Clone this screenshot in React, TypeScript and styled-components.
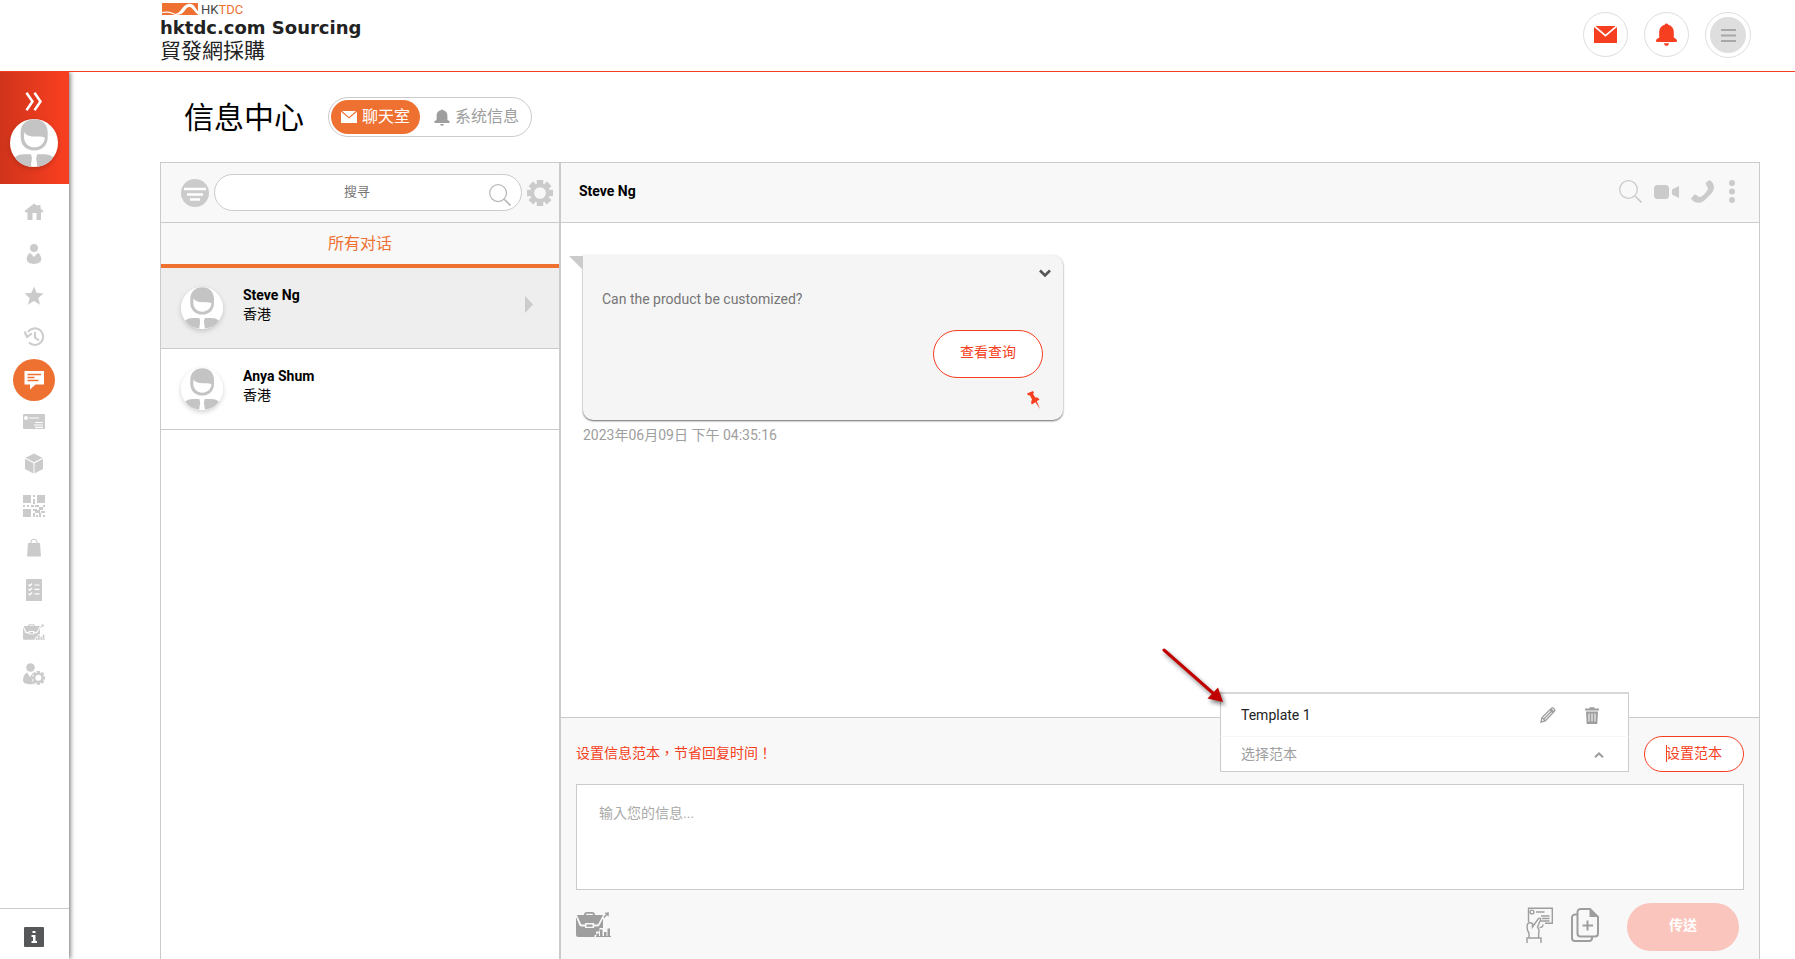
import React from 'react';
import styled, { createGlobalStyle } from 'styled-components';

const c = {
  red: '#f63e20',
  orange: '#ee7132',
  line: '#cbcbcb',
  icon: '#cbcbcb',
  mid: '#9e9e9e',
  panel: '#f8f8f8',
};

const GlobalStyle = createGlobalStyle`
  *, *::before, *::after { box-sizing: border-box; }
  body {
    margin: 0;
    background: #fff;
    color: #000;
    font-family: Roboto, "Noto Sans CJK TC", "Noto Sans CJK SC", sans-serif;
    font-size: 14px;
    line-height: 20px;
  }
  button, input, select, textarea { font: inherit; color: inherit; }
  button { padding: 0; border: 0; background: none; cursor: pointer; }
  a { color: inherit; text-decoration: none; }
  svg { display: block; flex: none; }
  h1, h2, p, ul { margin: 0; padding: 0; }
  ul { list-style: none; }
`;

/* ---------- page frame ---------- */

const Page = styled.div`
  display: flex;
  flex-direction: column;
  min-height: 100vh;
`;

const Header = styled.header`
  display: flex;
  justify-content: space-between;
  height: 72px;
  padding: 0 44px 0 160px;
  border-bottom: 1px solid ${c.red};
`;

const Brand = styled.a`
  display: flex;
  flex-direction: column;
  padding-top: 2px;
  color: #222;
`;

const BrandName = styled.span`
  font: bold 18px/24px "DejaVu Sans", sans-serif;
`;

const BrandLocal = styled.span`
  font-size: 21px;
  line-height: 22px;
`;

const HeaderActions = styled.div`
  display: flex;
  align-items: flex-start;
  gap: 16px;
  padding-top: 12px;
`;

const RoundButton = styled.button<{ $size?: number }>`
  display: grid;
  place-items: center;
  width: ${(p) => p.$size ?? 45}px;
  height: ${(p) => p.$size ?? 45}px;
  border: 1px solid #dedede;
  border-radius: 50%;
  color: ${c.red};
`;

const MenuDisc = styled.span`
  display: grid;
  place-items: center;
  width: 36px;
  height: 36px;
  border-radius: 50%;
  background: #dedede;
`;

const Body = styled.div`
  display: flex;
  flex: 1;
`;

/* ---------- side bar ---------- */

const Sidebar = styled.aside`
  display: flex;
  flex-direction: column;
  width: 69px;
  flex: none;
  box-shadow: 1px 0 5px rgba(0, 0, 0, 0.6);
  clip-path: inset(0 -12px 0 0);
`;

const SidebarTop = styled.div`
  display: flex;
  flex-direction: column;
  align-items: center;
  gap: 8px;
  height: 112px;
  padding: 20px 1px 0 0;
  background: linear-gradient(90deg, #cf341b, #f63e20 90%);
`;

const Nav = styled.nav`
  display: flex;
  flex-direction: column;
  align-items: center;
  padding: 7px 1px 0 0;
`;

const NavItem = styled.a<{ $active?: boolean }>`
  display: grid;
  place-items: center;
  width: 42px;
  height: 42px;
  border-radius: 50%;
  color: ${(p) => (p.$active ? '#fff' : c.icon)};
  background: ${(p) => (p.$active ? c.orange : 'transparent')};
`;

const SidebarFoot = styled.div`
  display: grid;
  place-items: center;
  height: 51px;
  margin-top: auto;
  padding: 6px 1px 0 0;
  border-top: 1px solid ${c.line};
`;

/* ---------- main ---------- */

const Main = styled.main`
  display: flex;
  flex: 1;
  min-width: 0;
  flex-direction: column;
  padding: 25px 35px 0 91px;
`;

const TitleRow = styled.div`
  display: flex;
  align-items: center;
  gap: 24px;
  height: 40px;
  margin-bottom: 25px;
  padding-left: 24px;
`;

const Title = styled.h1`
  padding-top: 2px;
  font-size: 30px;
  font-weight: 400;
  line-height: 40px;
`;

const Switcher = styled.div`
  display: flex;
  align-items: center;
  height: 40px;
  padding: 2px;
  border: 1px solid ${c.line};
  border-radius: 20px;
`;

const SwitchTab = styled.button<{ $active?: boolean }>`
  display: flex;
  align-items: center;
  gap: 5px;
  height: 34px;
  padding: 0 10px 0 ${(p) => (p.$active ? 10 : 14)}px;
  border-radius: 17px;
  font-size: 16px;
  color: ${(p) => (p.$active ? '#fff' : c.mid)};
  background: ${(p) => (p.$active ? c.orange : 'transparent')};
`;

const Panels = styled.div`
  display: grid;
  flex: 1;
  grid-template-columns: 400px minmax(0, 1fr);
  border-top: 1px solid ${c.line};
`;

const Panel = styled.section`
  display: flex;
  flex-direction: column;
  border: solid ${c.line};
  border-width: 0 1px;
`;

const PanelHead = styled.div`
  display: flex;
  align-items: center;
  height: 60px;
  border-bottom: 1px solid ${c.line};
  background: ${c.panel};
`;

const ListHead = styled(PanelHead)`
  gap: 5px;
  padding: 0 6px 0 20px;
`;

const SearchBox = styled.label`
  position: relative;
  flex: 1;
  color: #b9b9b9;

  > svg {
    position: absolute;
    top: 10px;
    right: 11px;
  }
`;

const SearchInput = styled.input`
  display: block;
  width: 100%;
  height: 37px;
  padding: 0 70px 2px 48px;
  border: 1px solid ${c.line};
  border-radius: 19px;
  outline: 0;
  background: #fff;
  color: #333;
  font-size: 13px;
  text-align: center;

  &::placeholder { color: #757575; }
`;

const IconButton = styled.button<{ $dark?: boolean }>`
  color: ${(p) => (p.$dark ? c.mid : c.icon)};
`;

const AllTab = styled.button`
  height: 45px;
  padding-top: 1px;
  border-bottom: 4px solid ${c.orange};
  background: ${c.panel};
  color: ${c.orange};
  font-size: 16px;
`;

const Contact = styled.button<{ $active?: boolean }>`
  display: flex;
  width: 100%;
  height: 81px;
  align-items: center;
  gap: 20px;
  padding: 0 26px 0 20px;
  border-bottom: 1px solid ${c.line};
  background: ${(p) => (p.$active ? '#eee' : '#fff')};
  color: ${c.icon};
  text-align: left;
`;

const AvatarFrame = styled.span`
  display: block;
  border-radius: 50%;
  box-shadow: 0 2px 5px rgba(0, 0, 0, 0.18);
`;

const ContactText = styled.span`
  flex: 1;
  padding-bottom: 6px;
  color: #000;
  line-height: 19px;

  > * { display: block; }
`;

const ChatHead = styled(PanelHead)`
  justify-content: space-between;
  padding: 0 24px 2px 18px;
`;

const ChatName = styled.h2`
  padding-bottom: 1px;
  font-size: 14px;
`;

const ChatTools = styled.div`
  display: flex;
  align-items: center;
  gap: 12px;
`;

const Messages = styled.div`
  flex: 1;
  padding: 32px 22px;
`;

const Bubble = styled.article`
  position: relative;
  display: flex;
  max-width: 480px;
  flex-direction: column;
  align-items: flex-end;
  padding: 10px 20px 11px 19px;
  border-radius: 0 10px 10px 10px;
  background: #f5f5f5;
  box-shadow: 0 1px 2px rgba(0, 0, 0, 0.6);

  &::before {
    content: "";
    position: absolute;
    top: 1px;
    left: -14px;
    border: solid transparent;
    border-width: 0 14px 14px 0;
    border-right-color: ${c.icon};
  }
`;

const BubbleToggle = styled.button`
  margin-right: -10px;
  color: #555;
`;

const BubbleText = styled.p`
  align-self: stretch;
  margin: 8px 0 21px;
  color: #757575;
`;

const OutlineButton = styled.button<{ $tall?: boolean }>`
  position: relative;
  height: ${(p) => (p.$tall ? 48 : 36)}px;
  padding: 0 ${(p) => (p.$tall ? 26 : 21)}px ${(p) => (p.$tall ? 4 : 2)}px;
  border: 1px solid ${c.red};
  border-radius: 24px;
  background: #fff;
  color: ${c.red};
`;

const Caret = styled.i`
  position: absolute;
  top: 8px;
  left: 21px;
  width: 1px;
  height: 17px;
  background: ${c.red};
`;

const PinIcon = styled.span`
  margin: 13px 2px 0 0;
  color: ${c.red};
`;

const Stamp = styled.time`
  display: block;
  margin-top: 5px;
  color: ${c.mid};
`;

/* ---------- composer ---------- */

const Composer = styled.form`
  padding: 18px 15px 8px;
  border-top: 1px solid ${c.line};
  background: ${c.panel};
`;

const TemplateRow = styled.div`
  display: flex;
  align-items: center;
  gap: 15px;
  margin-bottom: 12px;
`;

const Hint = styled.p`
  flex: 1;
  padding-bottom: 2px;
  color: ${c.red};
`;

const Picker = styled.div`
  position: relative;
  width: 409px;
`;

const PickerSelect = styled.select`
  display: block;
  width: 100%;
  height: 36px;
  padding: 0 20px;
  border: 1px solid ${c.line};
  border-top-color: #f7f7f7;
  border-radius: 0;
  outline: 0;
  appearance: none;
  background: #fff;
  color: ${c.mid};
`;

const PickerArrow = styled.span`
  position: absolute;
  top: 16px;
  right: 25px;
  color: ${c.mid};
  pointer-events: none;
`;

const PickerMenu = styled.ul`
  position: absolute;
  right: 0;
  bottom: 100%;
  left: 0;
  border: 1px solid ${c.line};
  border-top: 2px solid #d8d8d8;
  border-bottom: 0;
  background: #fff;
`;

const PickerOption = styled.li`
  display: flex;
  height: 42px;
  align-items: center;
  gap: 29px;
  padding: 0 29px 0 20px;

  > button:first-child {
    flex: 1;
    color: #222;
    text-align: left;
  }
`;

const Pointer = styled.svg`
  position: absolute;
  bottom: 60px;
  left: -60px;
  filter: drop-shadow(2px 3px 2px rgba(0, 0, 0, 0.5));
  pointer-events: none;
`;

const MessageInput = styled.textarea`
  display: block;
  width: 100%;
  height: 106px;
  padding: 18px 22px;
  border: 1px solid ${c.line};
  outline: 0;
  resize: none;
  background: #fff;

  &::placeholder { color: #a9a9a9; }
`;

const Toolbar = styled.div`
  display: flex;
  align-items: center;
  gap: 18px;
  margin: 13px 5px 0 0;

  > button {
    padding-bottom: 5px;
    color: ${c.mid};
  }

  > button:first-child { margin-right: auto; }
`;

const SendButton = styled.button`
  && {
    width: 112px;
    height: 48px;
    margin-left: 10px;
    padding-bottom: 4px;
    border-radius: 24px;
    background: #f9c5bc;
    color: #fff;
    font-weight: 700;
  }
`;

/* ---------- drawings ---------- */

const Avatar = ({ size }: { size: number }) => (
  <AvatarFrame>
    <svg width={size} height={size} viewBox="0 0 42 42">
      <circle cx="21" cy="21" r="21" fill="#fff" />
      <path
        fill="#c4c4c4"
        d="M21.3.3C28 .3 33 4.500 33 12v4c0 7-5 11.600-11.700 11.600S9.300 23 9.300 16v-4C9.300 4.500 14.500.3 21.300.3ZM4.300 33.600c2-2 4.500-2.700 7.700-2.700h6.300l.9 3.300-1 7.600C12.500 41 7.500 38.500 4.300 33.600Zm33.500 0c-2-2-4.500-2.700-7.700-2.700h-6.300l-.9 3.300 1 7.600c5.600-.8 10.700-3.300 13.900-8.200Z"
      />
      <path fill="#fff" d="M12.600 11.300c1.400 3.500 6 4 10.400 4 3.300 0 5.700-.1 7.500 1-.5 5.200-4.400 8.400-9.200 8.400-5 0-8.800-3.600-9-8.400-.1-1.700 0-3.500.3-5Z" />
    </svg>
  </AvatarFrame>
);

const Logo = () => (
  <svg width="90" height="14" viewBox="0 0 90 14">
    <path fill="#ee7132" d="M2 1h36v12H2Z" />
    <path fill="#fff" d="M0 10c5-.4 9-.8 12 .4 2 .8 3 1.600 4.500 1.200C21 10.500 22 3.500 28 2c3-.6 5 .6 6.500 2.500C36 6.500 38 10 42 13h-3c-4-2-5.500-6-8-7.500-2-1-4 0-5 1.500C24.500 9 22 13 17 13c-4 0-5-2-9-2.300L0 11Z" />
    <text x="41" y="12" fontFamily="Roboto, sans-serif" fontSize="13" fill="#444">
      HK<tspan fill="#ee7132">TDC</tspan>
    </text>
  </svg>
);

const Envelope = ({ w, h }: { w: number; h: number }) => (
  <svg width={w} height={h} viewBox="0 0 23 17" fill="currentColor" preserveAspectRatio="none">
    <path d="M1.500 0h20l-10 8.600ZM0 1l11.500 9.800L23 1v16H0Z" />
  </svg>
);

const Bell = ({ w, h }: { w: number; h: number }) => (
  <svg width={w} height={h} viewBox="0 0 21 23" fill="currentColor">
    <path d="M8.700 1.800a1.900 1.900 0 0 1 3.600 0C16 2.800 17.800 5.500 17.800 9v5.500c0 .8 3.200 1.200 3.200 3 0 1-.6 1.500-1.500 1.500h-18C.6 19 0 18.500 0 17.500c0-1.800 3.200-2.200 3.200-3V9C3.200 5.500 5 2.800 8.700 1.800ZM8 20.200h5C12.600 22 11.700 22.800 10.500 22.800S8.400 22 8 20.200Z" />
  </svg>
);

const SearchIcon = ({ size }: { size: number }) => (
  <svg width={size} height={size} viewBox="0 0 23 23" fill="none" stroke="currentColor" strokeWidth="1.300">
    <circle cx="9.500" cy="9.500" r="8.800" />
    <path d="m16 16 6.500 6.500" strokeWidth="1.700" />
  </svg>
);

const Briefcase = ({ w, h }: { w: number; h: number }) => (
  <svg width={w} height={h} viewBox="0 0 35 25" fill="currentColor">
    <path d="M8 3c0-2 1-3 3-3h5c2 0 3 1 3 3h8l-4.500 8.500c-.4.800-.8 1-1.700 1h-2.600V11H9v1.500H6.500c-.9 0-1.400-.3-1.700-1L1 3Zm2 0h7c0-.9-.4-1.300-1.300-1.300h-4.400C10.400 1.700 10 2.100 10 3Z" />
    <path d="M0 5l3.300 8c.4 1 1 1.400 2.200 1.400H9V16h9v-1.600h3.300c1.200 0 1.800-.4 2.300-1.400L27 6.500V16h-3.500v3.500H20V23h-1.500v2H2.500C.8 25 0 24.200 0 22.500ZM10.500 12.500h6v2.200h-6Z" />
    <path d="M20.500 21.500H23V25h-2.500ZM24 17.500h2.500V25H24ZM28 20h2.500v5H28ZM31.500 16.500H34V25h-2.500ZM20 24h15v1H20ZM28.500.8 33 .3l-.5 4.500-1.500-1.500-2.500 2.800-1.200-1.200L30 2.300Z" />
  </svg>
);

const gearTeeth = [0, 45, 90, 135];

const Gear = ({ size }: { size: number }) => (
  <svg width={size} height={size} viewBox="0 0 24 24">
    {gearTeeth.map((a) => (
      <path key={a} d="M9 0h6v3.500l-1 1.500h-4L9 3.500ZM9 24h6v-3.500l-1-1.500h-4l-1 1.500Z" fill="currentColor" transform={`rotate(${a} 12 12)`} />
    ))}
    <circle cx="12" cy="12" r="7.200" fill="none" stroke="currentColor" strokeWidth="3.600" />
  </svg>
);

const Glyph = ({ children, w = 22, h = 22 }: { children: React.ReactNode; w?: number; h?: number }) => (
  <svg width={w} height={h} viewBox={`0 0 ${w} ${h}`} fill="currentColor">
    {children}
  </svg>
);

const navItems: { label: string; active?: boolean; icon: React.ReactNode }[] = [
  {
    label: '主页',
    icon: (
      <Glyph>
        <path d="M11 2.500 14.500 5V4H17.500v3.500L20.500 10l-1 1.500H18V19h-4.500v-7h-4v7H4.500v-7.500h-2l-1-1.500Z" />
      </Glyph>
    ),
  },
  {
    label: '帐户',
    icon: (
      <Glyph>
        <circle cx="11" cy="5" r="4" />
        <path d="M7 9.700 11 14l4-4.300c2 1.300 3.300 4 3.300 6.600 0 2.700-3.300 4.700-7.300 4.700s-7.300-2-7.300-4.700c0-2.600 1.300-5.300 3.300-6.600Z" />
      </Glyph>
    ),
  },
  {
    label: '收藏',
    icon: (
      <Glyph>
        <path d="m11 1.500 2.600 6.300 6.900.6-5.200 4.600 1.700 6.700-6-3.600-6 3.600 1.700-6.700L1.500 8.400l6.900-.6Z" />
      </Glyph>
    ),
  },
  {
    label: '历史',
    icon: (
      <Glyph>
        <path d="M5 5A8.300 8.300 0 1 1 6 15.500" fill="none" stroke="currentColor" strokeWidth="2" />
        <path d="M1.500 4.500 4 10 9 6.500M12 5v5.500l4 3" fill="none" stroke="currentColor" strokeWidth="2" />
      </Glyph>
    ),
  },
  {
    label: '信息中心',
    active: true,
    icon: (
      <Glyph>
        <path d="M1.500 2H21v13.500h-8.500L7 20.500v-5H1.500Z" />
        <path d="M4.500 5.500h13.500M4.500 8.500h7M4.500 11.500h11" stroke={c.orange} strokeWidth="1.300" />
      </Glyph>
    ),
  },
  {
    label: '名片',
    icon: (
      <Glyph>
        <rect y="3" width="22" height="15" rx="1" />
        <circle cx="3" cy="7" r="2" fill="#fff" />
        <path d="M6 7h10M12 11.500h8M11 14h9M12 16.300h8" stroke="#fff" strokeWidth="1.200" />
      </Glyph>
    ),
  },
  {
    label: '产品',
    icon: (
      <Glyph>
        <path d="m11 .5 8.500 4.300L11 9.300 2.500 4.800ZM2 5.700l8.500 4.500v10.300L2 16ZM20 5.700l-8.500 4.500v10.300L20 16Z" />
      </Glyph>
    ),
  },
  {
    label: '二维码',
    icon: (
      <Glyph>
        <path d="M0 0h8v8H0ZM14 0h8v8h-8ZM0 14h8v8H0ZM10 0h2v2h-2ZM10 4h2v5h-2ZM0 10h2v2H0ZM4 10h2v2H4ZM8 10h3v2H8ZM12 10h4v2h-4ZM20 10h2v2h-2ZM10 14h4v2h-4ZM16 12h4v3h-4ZM14 15h3v3h-3ZM10 18h2v4h-2ZM12 16h2v2h-2ZM18 16h4v2h-4ZM16 18h2v4h-2ZM20 20h2v2h-2ZM13 20h2v2h-2Z" />
      </Glyph>
    ),
  },
  {
    label: '订单',
    icon: (
      <Glyph>
        <path d="M5 6h12l1 13.500H4Z" />
        <path d="M8 7V5.200a3 3 0 0 1 6 0V7" fill="none" stroke="currentColor" strokeWidth="1.100" />
      </Glyph>
    ),
  },
  {
    label: '清单',
    icon: (
      <Glyph>
        <rect x="3" width="16" height="22" rx=".6" />
        <path d="m5.500 5.500 1.300 1.300L9.200 4.500M5.500 10l1.300 1.300L9.200 9M5.500 14.500l1.300 1.300L9.200 13.500M11.500 6h5M11.500 10.300h5M11.500 14.800h5" fill="none" stroke="#fff" strokeWidth="1.200" />
      </Glyph>
    ),
  },
  { label: '商机', icon: <Briefcase w={22} h={16} /> },
  {
    label: '用户设置',
    icon: (
      <Glyph>
        <circle cx="7.500" cy="4.500" r="4.300" />
        <path d="M4 9.500 7 14l2-3 1.500-1c-2 3-2.500 7 .5 10.700-1 .5-2 .6-3.500.6C3.500 21.300 0 20.500 0 17c0-3 1.500-6.300 4-7.500Z" />
        <g transform="translate(8.500 8) scale(.57)">
          {gearTeeth.map((a) => (
            <path key={a} d="M9 0h6v4h-6ZM9 24h6v-4h-6Z" transform={`rotate(${a} 12 12)`} />
          ))}
          <circle cx="12" cy="12" r="7.200" fill="none" stroke="currentColor" strokeWidth="3.800" />
        </g>
      </Glyph>
    ),
  },
];

const contacts = [
  { name: 'Steve Ng', place: '香港', active: true },
  { name: 'Anya Shum', place: '香港', active: false },
];

export default function App() {
  return (
    <Page>
      <GlobalStyle />
      <Header>
        <Brand href="#">
          <Logo />
          <BrandName>hktdc.com Sourcing</BrandName>
          <BrandLocal>貿發網採購</BrandLocal>
        </Brand>
        <HeaderActions>
          <RoundButton type="button" aria-label="邮件">
            <Envelope w={23} h={17} />
          </RoundButton>
          <RoundButton type="button" aria-label="通知">
            <Bell w={21} h={23} />
          </RoundButton>
          <RoundButton type="button" aria-label="菜单" $size={46}>
            <MenuDisc>
              <svg width="15" height="13" viewBox="0 0 15 13" stroke="#a8a8a8" strokeWidth="2">
                <path d="M0 1h15M0 6.500h15M0 12h15" />
              </svg>
            </MenuDisc>
          </RoundButton>
        </HeaderActions>
      </Header>

      <Body>
        <Sidebar>
          <SidebarTop>
            <button type="button" aria-label="展开">
              <svg width="18" height="19" viewBox="0 0 18 19" fill="none" stroke="#fff" strokeWidth="2.500">
                <path d="m1.500.8 6 8.700-6 8.700M9.500.8l6 8.700-6 8.700" />
              </svg>
            </button>
            <Avatar size={48} />
          </SidebarTop>
          <Nav>
            {navItems.map((item) => (
              <NavItem key={item.label} href="#" aria-label={item.label} $active={item.active}>
                {item.icon}
              </NavItem>
            ))}
          </Nav>
          <SidebarFoot>
            <a href="#" aria-label="说明">
              <svg width="20" height="20" viewBox="0 0 20 20">
                <rect width="20" height="20" rx="1" fill="#555759" />
                <path d="M8.500 4h3v2h-3ZM7.500 8h4v6H13v2H7.500v-2H9v-4H7.500Z" fill="#fff" />
              </svg>
            </a>
          </SidebarFoot>
        </Sidebar>

        <Main>
          <TitleRow>
            <Title>信息中心</Title>
            <Switcher>
              <SwitchTab type="button" $active>
                <Envelope w={16} h={12} />
                聊天室
              </SwitchTab>
              <SwitchTab type="button">
                <Bell w={16} h={17} />
                系统信息
              </SwitchTab>
            </Switcher>
          </TitleRow>

          <Panels>
            <Panel>
              <ListHead>
                <IconButton type="button" aria-label="筛选">
                  <svg width="28" height="28" viewBox="0 0 28 28">
                    <circle cx="14" cy="14" r="14" fill="currentColor" />
                    <path d="M3 10h22M6 15.500h16M9 20.500h10" stroke="#fff" strokeWidth="2.400" />
                  </svg>
                </IconButton>
                <SearchBox>
                  <SearchInput placeholder="搜寻" aria-label="搜寻" />
                  <SearchIcon size={22} />
                </SearchBox>
                <IconButton type="button" aria-label="设置">
                  <Gear size={26} />
                </IconButton>
              </ListHead>
              <AllTab type="button">所有对话</AllTab>
              {contacts.map((p) => (
                <Contact key={p.name} type="button" $active={p.active}>
                  <Avatar size={42} />
                  <ContactText>
                    <strong>{p.name}</strong>
                    <span>{p.place}</span>
                  </ContactText>
                  {p.active && (
                    <svg width="8" height="24" viewBox="0 0 8 24" fill="currentColor">
                      <path d="M0 0l8 8.500L0 17Z" />
                    </svg>
                  )}
                </Contact>
              ))}
            </Panel>

            <Panel>
              <ChatHead>
                <ChatName>Steve Ng</ChatName>
                <ChatTools>
                  <IconButton type="button" aria-label="搜寻对话"><SearchIcon size={23} /></IconButton>
                  <IconButton type="button" aria-label="视频">
                    <Glyph w={25} h={14}>
                      <rect width="15" height="14" rx="3.500" />
                      <path d="M18 4.500 25 1v12l-7-3.500Z" />
                    </Glyph>
                  </IconButton>
                  <IconButton type="button" aria-label="电话">
                    <Glyph w={23} h={23}>
                      <path d="M15 2.500 18.500 0C21.500 1.500 23 4.500 23 8c-.5 3-2 5-4.500 7.500S14 20.500 10 22.500C6 23.500 2 22 0 18.500l3.500-4C5 14 6.500 16 8 17l2.500-.5c2.500-1.800 4.500-4 6-6.500L17 8c-1-2-3-3.500-2-5.500Z" />
                    </Glyph>
                  </IconButton>
                  <IconButton type="button" aria-label="更多">
                    <Glyph w={9} h={23}>
                      <circle cx="6" cy="3" r="3" />
                      <circle cx="6" cy="11.500" r="3" />
                      <circle cx="6" cy="20" r="3" />
                    </Glyph>
                  </IconButton>
                </ChatTools>
              </ChatHead>

              <Messages>
                <Bubble>
                  <BubbleToggle type="button" aria-label="折叠">
                    <svg width="16" height="16" viewBox="0 0 16 16" fill="none" stroke="currentColor" strokeWidth="2.600">
                      <path d="m3 5.500 5 5 5-5" />
                    </svg>
                  </BubbleToggle>
                  <BubbleText>Can the product be customized?</BubbleText>
                  <OutlineButton type="button" $tall>查看查询</OutlineButton>
                  <PinIcon>
                    <Glyph w={14} h={18}>
                      <path d="M0 2.500 6 0l1 1.500-1 1.200 2.300 3.800c1.900-.3 3.300.3 4.200 2L9.800 10.300 13 18l-4.500-6.700-3.700 2.200c-1-1.600-.7-3.300.3-4.700L3 4.500l-2-.2Z" />
                    </Glyph>
                  </PinIcon>
                </Bubble>
                <Stamp dateTime="2023-06-09T16:35:16">2023年06月09日 下午 04:35:16</Stamp>
              </Messages>

              <Composer onSubmit={(e) => e.preventDefault()}>
                <TemplateRow>
                  <Hint>设置信息范本，节省回复时间！</Hint>
                  <Picker>
                    <PickerMenu>
                      <PickerOption>
                        <button type="button">Template 1</button>
                        <IconButton type="button" aria-label="编辑" $dark>
                          <svg width="16" height="16" viewBox="0 0 16 16" fill="none" stroke="currentColor" strokeWidth="1.300">
                            <path d="M1 15l1-4.500L11.500 1.200c1.500-1 4 1.300 3 3L5.300 13.800ZM2 10.500l3.300 3.300M10 2.700l3.200 3.200M3.800 12 11.800 4M11 2l3 3" />
                          </svg>
                        </IconButton>
                        <IconButton type="button" aria-label="删除" $dark>
                          <Glyph w={14} h={17}>
                            <path d="M0 1.500h4.500V.3h5v1.200H14v2H0ZM1 4.500h12L12.300 17H1.700Zm2.500 2v8h1v-8Zm3 0v8h1v-8Zm3 0v8h1v-8Z" fillRule="evenodd" />
                          </Glyph>
                        </IconButton>
                      </PickerOption>
                    </PickerMenu>
                    <PickerSelect aria-label="选择范本" defaultValue="">
                      <option value="">选择范本</option>
                      <option value="1">Template 1</option>
                    </PickerSelect>
                    <PickerArrow>
                      <svg width="10" height="6" viewBox="0 0 10 6" fill="none" stroke="currentColor" strokeWidth="2">
                        <path d="M1 5.300 5 1.500l4 3.800" />
                      </svg>
                    </PickerArrow>
                    <Pointer width="76" height="66" viewBox="0 0 76 66">
                      <path d="M4 4 54 48" stroke="#c00000" strokeWidth="3" strokeLinecap="round" />
                      <path d="M63 56 47.500 52.500 58 41.500Z" fill="#c00000" />
                    </Pointer>
                  </Picker>
                  <OutlineButton type="button">
                    <Caret />
                    设置范本
                  </OutlineButton>
                </TemplateRow>

                <MessageInput placeholder="输入您的信息..." aria-label="输入您的信息" />

                <Toolbar>
                  <button type="button" aria-label="商机">
                    <Briefcase w={35} h={25} />
                  </button>
                  <button type="button" aria-label="发送名片">
                    <svg width="27" height="36" viewBox="0 0 27 36" fill="none" stroke="currentColor" strokeWidth="1.400">
                      <path d="M2.500 15V1.200h23.800v15H19M17 17.500c0 2-1.500 3-3.500 3" />
                      <circle cx="6" cy="5" r="1.900" />
                      <path d="M10 5h8.500M15 9h8.500M16 11.500h7.500M14.500 14h9" />
                      <path d="M1 36v-5h14v5M3 31v-5c-2-2.500-2.500-5-1.500-9l2-1.500 3 1V20l6-8.500c1.500-1 2.500.2 2 1.500l-3 7 1.500 3-.5 8" />
                    </svg>
                  </button>
                  <button type="button" aria-label="添加文件">
                    <svg width="28" height="34" viewBox="0 0 28 34" fill="none" stroke="currentColor" strokeWidth="2">
                      <path d="M19 1H9.500A3 3 0 0 0 6.500 4v21.500a3 3 0 0 0 3 3H24a3 3 0 0 0 3-3V9Z" />
                      <path d="M6 6.500H4a3 3 0 0 0-3 3V30a3 3 0 0 0 3 3h14a3 3 0 0 0 3-3v-1.500M16.500 12.500v10M11.500 17.500h10.500" />
                      <path d="M18.500 1v8H27Z" fill="currentColor" stroke="none" />
                    </svg>
                  </button>
                  <SendButton type="submit">传送</SendButton>
                </Toolbar>
              </Composer>
            </Panel>
          </Panels>
        </Main>
      </Body>
    </Page>
  );
}
